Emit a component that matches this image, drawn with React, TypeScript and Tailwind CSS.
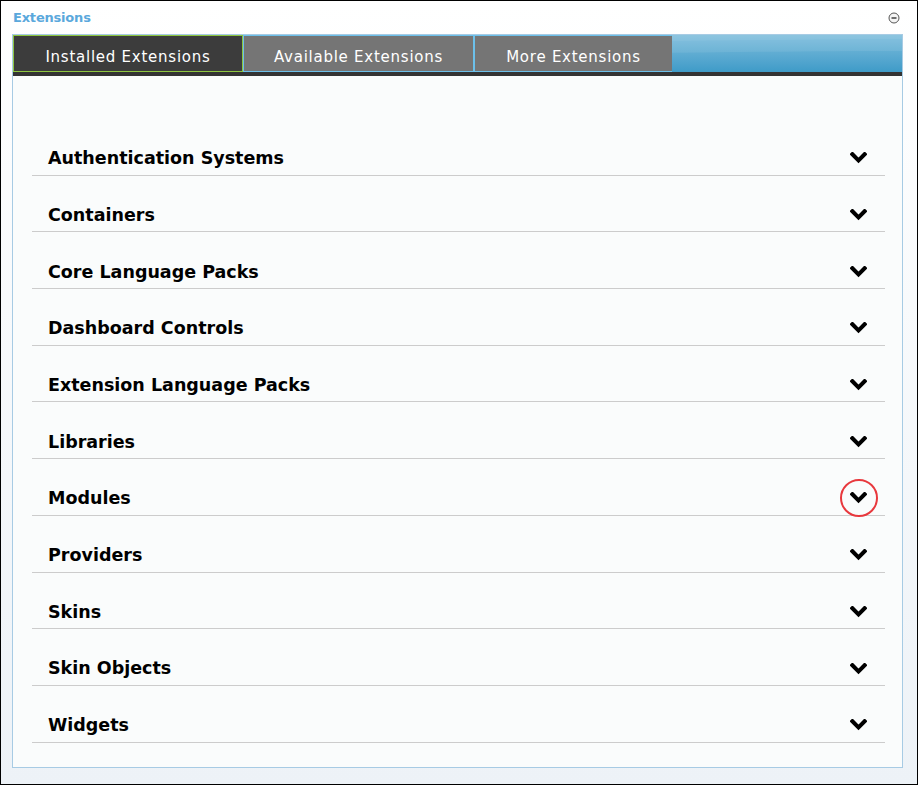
import React from "react";

const rows = [
  "Authentication Systems",
  "Containers",
  "Core Language Packs",
  "Dashboard Controls",
  "Extension Language Packs",
  "Libraries",
  "Modules",
  "Providers",
  "Skins",
  "Skin Objects",
  "Widgets",
];

function Chevron() {
  return (
    <svg width="17" height="12" viewBox="0 0 17 12">
      <polyline
        points="2.4,2.2 8.5,8.3 14.6,2.2"
        fill="none"
        stroke="#000"
        strokeWidth="4"
        strokeLinejoin="miter"
        strokeLinecap="square"
      />
    </svg>
  );
}

export default function App() {
  return (
    <div
      className="w-[918px] h-[785px] border border-black bg-gradient-to-b from-white to-[#edf2f7] px-[11px] pt-[7px] flex flex-col"
      style={{ fontFamily: '"DejaVu Sans", Verdana, sans-serif' }}
    >
      <div className="flex items-center justify-between h-[20px] pl-px pr-[2px]">
        <span className="text-[13px] font-bold text-[#5aa8dc] tracking-[-0.2px]">Extensions</span>
        <svg width="12" height="12" viewBox="0 0 12 12" className="mr-[4px]">
          <circle cx="6" cy="6" r="5" fill="#f4f4f4" stroke="#555" strokeWidth="1" />
          <line x1="3.5" y1="6" x2="8.5" y2="6" stroke="#333" strokeWidth="1.4" />
        </svg>
      </div>
      <div className="mt-[6px] w-[891px] h-[734px] border border-[#a7cbe4] bg-[#fafcfc] flex flex-col">
        <div className="relative h-[37px] flex bg-gradient-to-b from-[#7cbddc] to-[#3e9bc8] overflow-hidden">
          <svg className="absolute inset-0" width="889" height="37" preserveAspectRatio="none" viewBox="0 0 889 37">
            <path d="M0 0 H889 V16 C700 16 400 22 0 30 Z" fill="#ffffff" opacity="0.08" />
            <path d="M0 0 H889 V4 C700 5 500 8 0 14 Z" fill="#ffffff" opacity="0.06" />
          </svg>
          <div className="relative z-10 w-[230px] h-[37px] pt-[8px] bg-[#3c3c3c] border border-[#8ec63f] flex items-center justify-center text-white text-[15px] tracking-[0.75px]">
            Installed Extensions
          </div>
          <div className="relative z-10 w-[231px] h-[37px] pt-[8px] bg-[#757575] border border-[#6cc0ea] flex items-center justify-center text-white text-[15px] tracking-[0.75px]">
            Available Extensions
          </div>
          <div className="relative z-10 w-[198px] h-[37px] pt-[8px] bg-[#757575] border-l border-t border-b border-[#6cc0ea] flex items-center justify-center text-white text-[15px] tracking-[0.75px]">
            More Extensions
          </div>
        </div>
        <div className="h-[4px] bg-[#333333]" />
        <div className="pt-[43px] pl-[19px] pr-[17px] flex flex-col">
          {rows.map((r) => (
            <div
              key={r}
              className="h-[56.7px] border-b border-[#cccccc] flex items-center justify-between pt-[23px] pl-[16px] pr-[18px]"
            >
              <span className="text-[17.5px] font-bold text-black">{r}</span>
              <span className="relative flex items-center justify-center w-[17px] h-[12px]">
                <Chevron />
                {r === "Modules" && (
                  <span className="absolute left-1/2 top-1/2 -translate-x-1/2 -translate-y-1/2 w-[38px] h-[38px] rounded-full border-2 border-[#e8383d]" />
                )}
              </span>
            </div>
          ))}
        </div>
      </div>
    </div>
  );
}
